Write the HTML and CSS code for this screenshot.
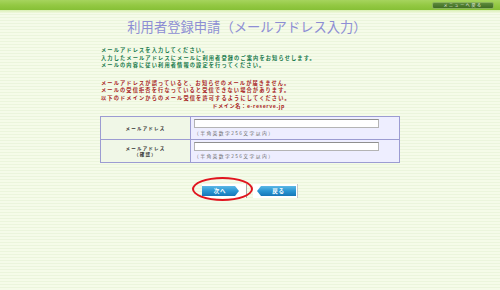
FILE: index.html
```html
<!DOCTYPE html>
<html lang="ja">
<head>
<meta charset="utf-8">
<title>利用者登録申請（メールアドレス入力）</title>
<link rel="stylesheet" href="styles.css">
</head>
<body>
<div class="page">
  <header class="topbar">
    <a class="menu-btn">メニューへ戻る</a>
  </header>
  <div class="band"></div>
  <h1 class="title">利用者登録申請（メールアドレス入力）</h1>

  <div class="msg green">
    <p>メールアドレスを入力してください。</p>
    <p>入力したメールアドレスにメールに利用者登録のご案内をお知らせします。</p>
    <p>メールの内容に従い利用者情報の設定を行ってください。</p>
  </div>

  <div class="msg red">
    <p>メールアドレスが誤っていると、お知らせのメールが届きません。</p>
    <p>メールの受信拒否を行なっていると受信できない場合があります。</p>
    <p>以下のドメインからのメール受信を許可するようにしてください。</p>
    <p class="domain">ドメイン名：e-reserve.jp</p>
  </div>

  <table class="form">
    <tr>
      <th class="label">メールアドレス</th>
      <td class="field">
        <div class="input"></div>
        <div class="hint">（半角英数字256文字以内）</div>
      </td>
    </tr>
    <tr>
      <th class="label">メールアドレス<br>（確認）</th>
      <td class="field">
        <div class="input"></div>
        <div class="hint">（半角英数字256文字以内）</div>
      </td>
    </tr>
  </table>

  <div class="buttons">
    <div class="btn-wrap">
      <a class="btn next">
        <svg class="btn-bg" width="45" height="14" viewBox="0 0 45 14">
          <defs>
            <linearGradient id="bl" x1="0" y1="0" x2="0" y2="1">
              <stop offset="0" stop-color="#5bb8e6"/>
              <stop offset="0.5" stop-color="#2a95d2"/>
              <stop offset="1" stop-color="#1677b8"/>
            </linearGradient>
          </defs>
          <rect x="0" y="0" width="45" height="14" fill="#ffffff"/>
          <rect x="44" y="0" width="1" height="14" fill="#a9a9a9"/>
          <polygon points="0,2 33,2 37,7 33,12 0,12" fill="url(#bl)"/>
        </svg>
        <span class="btn-text">次へ</span>
      </a>
      <span class="circle"></span>
    </div>
    <a class="btn back">
      <svg class="btn-bg" width="45" height="14" viewBox="0 0 45 14">
        <defs>
          <linearGradient id="bl2" x1="0" y1="0" x2="0" y2="1">
            <stop offset="0" stop-color="#5bb8e6"/>
            <stop offset="0.5" stop-color="#2a95d2"/>
            <stop offset="1" stop-color="#1677b8"/>
          </linearGradient>
        </defs>
        <rect x="0" y="0" width="45" height="14" fill="#ffffff"/>
        <rect x="44" y="0" width="1" height="14" fill="#c8c8c8"/>
        <polygon points="4,7 8,2 43,2 43,12 8,12" fill="url(#bl2)"/>
      </svg>
      <span class="btn-text back-text">戻る</span>
    </a>
  </div>
</div>
</body>
</html>
```

FILE: styles.css
```css
html, body {
  margin: 0;
  padding: 0;
}

body {
  width: 500px;
  height: 290px;
  overflow: hidden;
  font-family: "Noto Sans CJK JP", "Liberation Sans", sans-serif;
  background: repeating-linear-gradient(to bottom, #f5fbe9 0px, #f5fbe9 2px, #ebf5dc 2px, #ebf5dc 3px);
}

.page {
  position: relative;
  width: 500px;
}

.topbar {
  height: 10px;
  background: linear-gradient(to bottom, #a6d45e 0%, #94c944 50%, #86c036 100%);
  display: flex;
  justify-content: flex-end;
  align-items: flex-start;
  padding-right: 6px;
}

.band {
  height: 3px;
  background: linear-gradient(to bottom, #d9efb4, #eff8dd);
}

.menu-btn {
  margin-top: 2px;
  width: 62px;
  height: 7px;
  box-sizing: border-box;
  border-radius: 2px;
  background: linear-gradient(to bottom, #5d8b3a, #3f6c24);
  border: 1px solid #8bb35c;
  color: #eef5e6;
  font-size: 4px;
  line-height: 5px;
  text-align: center;
  letter-spacing: 1.6px;
  display: block;
  overflow: hidden;
}

.title {
  margin: 6px 0 0 0;
  height: 16px;
  line-height: 16px;
  font-size: 13.3px;
  font-weight: normal;
  color: #8d8ed4;
  text-align: center;
  padding-right: 6px;
}

.msg {
  margin-left: 101px;
  font-size: 5.2px;
  letter-spacing: 1.15px;
  line-height: 7.6px;
  font-weight: bold;
}

.msg p {
  margin: 0;
  white-space: nowrap;
}

.green {
  margin-top: 11px;
  color: #14784a;
}

.red {
  margin-top: 10px;
  color: #a81c1c;
}

.domain {
  width: 184px;
  text-align: right;
  letter-spacing: 0.6px;
}

.form {
  margin: 7px 0 0 100px;
  width: 300px;
  border-collapse: collapse;
  border: 1px solid #9c9cd2;
}

.form tr {
  height: 23px;
}

.form th,
.form td {
  border: 1px solid #9c9cd2;
  padding: 0;
}

.label {
  width: 89px;
  background: #f0f7e7;
  color: #333333;
  font-size: 4.5px;
  letter-spacing: 1.2px;
  line-height: 6.6px;
  font-weight: bold;
  text-align: center;
  vertical-align: middle;
}

.field {
  background: #eeeeff;
  vertical-align: top;
  padding: 2px 3px 0 3px !important;
}

.input {
  width: 185px;
  height: 9px;
  box-sizing: border-box;
  background: #ffffff;
  border: 1px solid #b4b4b4;
  border-top-color: #8f8f8f;
}

.hint {
  font-size: 4.8px;
  letter-spacing: 1.4px;
  line-height: 7px;
  color: #6b6b6b;
  margin-top: 0.5px;
}

.buttons {
  margin-top: 21px;
  display: flex;
  justify-content: center;
  gap: 6px;
}

.btn-wrap {
  position: relative;
}

.btn {
  position: relative;
  display: block;
  width: 45px;
  height: 14px;
}

.btn-bg {
  display: block;
}

.btn-text {
  position: absolute;
  top: 2px;
  left: 0;
  width: 36px;
  height: 10px;
  line-height: 10px;
  text-align: center;
  color: #ffffff;
  font-size: 5.5px;
  letter-spacing: 0.8px;
  font-weight: bold;
}

.back-text {
  left: 8px;
  width: 35px;
}

.circle {
  position: absolute;
  left: -10px;
  top: -7px;
  width: 61px;
  height: 24px;
  box-sizing: border-box;
  border: 2px solid #e0141e;
  border-radius: 50%;
}
```
